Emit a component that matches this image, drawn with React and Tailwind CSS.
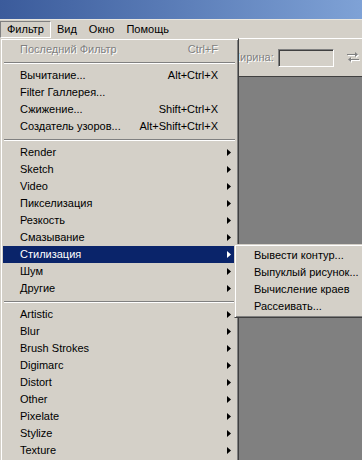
import React from 'react';

const FONT = { fontFamily: '"Liberation Sans", Arial, sans-serif' };

const MENU_BAR = ['Фильтр', 'Вид', 'Окно', 'Помощь'];

// null = separator
const ITEMS = [
  { label: 'Последний Фильтр', shortcut: 'Ctrl+F', disabled: true },
  null,
  { label: 'Вычитание...', shortcut: 'Alt+Ctrl+X' },
  { label: 'Filter Галлерея...' },
  { label: 'Сжижение...', shortcut: 'Shift+Ctrl+X' },
  { label: 'Создатель узоров...', shortcut: 'Alt+Shift+Ctrl+X' },
  null,
  { label: 'Render', sub: true },
  { label: 'Sketch', sub: true },
  { label: 'Video', sub: true },
  { label: 'Пикселизация', sub: true },
  { label: 'Резкость', sub: true },
  { label: 'Смазывание', sub: true },
  { label: 'Стилизация', sub: true, active: true },
  { label: 'Шум', sub: true },
  { label: 'Другие', sub: true },
  null,
  { label: 'Artistic', sub: true },
  { label: 'Blur', sub: true },
  { label: 'Brush Strokes', sub: true },
  { label: 'Digimarc', sub: true },
  { label: 'Distort', sub: true },
  { label: 'Other', sub: true },
  { label: 'Pixelate', sub: true },
  { label: 'Stylize', sub: true },
  { label: 'Texture', sub: true },
];

const SUB_ITEMS = ['Вывести контур...', 'Выпуклый рисунок...', 'Вычисление краев', 'Рассеивать...'];

function Arrow({ white }) {
  return (
    <svg width="4" height="7" viewBox="0 0 4 7" className="absolute right-[5px] top-[5px]">
      <polygon points="0,0 4,3.5 0,7" fill={white ? '#fff' : '#000'} />
    </svg>
  );
}

function Separator() {
  return (
    <div className="h-[9px] flex items-center px-px">
      <div className="w-full border-t border-t-[#808080] border-b border-b-white" />
    </div>
  );
}

function MenuItem({ item }) {
  return (
    <div
      className={
        'relative h-[17px] flex items-center pl-[17px] pr-[18px] whitespace-nowrap ' +
        (item.active ? 'bg-[#0a246a] text-white' : 'text-black')
      }
    >
      <span
        className={item.disabled ? 'flex-1 text-[#808080] [text-shadow:1px_1px_0_#fff]' : 'flex-1'}
      >
        {item.label}
      </span>
      {item.shortcut && (
        <span className={item.disabled ? 'text-[#808080] [text-shadow:1px_1px_0_#fff]' : ''}>
          {item.shortcut}
        </span>
      )}
      {item.sub && <Arrow white={item.active} />}
    </div>
  );
}

function SwapIcon() {
  return (
    <svg width="13" height="11" viewBox="0 0 13 11">
      <g fill="#fff" transform="translate(1,1)">
        <rect x="0" y="2" width="9" height="1" />
        <polygon points="8,0 11,2.5 8,5" />
        <rect x="3" y="7" width="9" height="1" />
        <polygon points="4,5 1,7.5 4,10" />
      </g>
      <g fill="#808080">
        <rect x="0" y="2" width="9" height="1" />
        <polygon points="8,0 11,2.5 8,5" />
        <rect x="3" y="7" width="9" height="1" />
        <polygon points="4,5 1,7.5 4,10" />
      </g>
    </svg>
  );
}

export default function App() {
  return (
    <div className="relative w-[362px] h-[460px] overflow-hidden bg-[#d4d0c8] text-[11px] flex flex-col" style={FONT}>
      {/* Title bar */}
      <div className="h-[19px] bg-gradient-to-r from-[#3b5b9b] to-[#7fa2d6]" />

      {/* Menu bar */}
      <div className="h-[19px] flex items-center border-t border-t-[#e8e6e0]">
        {MENU_BAR.map((m, i) => (
          <div
            key={m}
            className={
              'h-[17px] flex items-center px-[6px] text-black ' +
              (i === 0 ? 'border border-t-[#808080] border-l-[#808080] border-r-white border-b-white px-[5px]' : '')
            }
          >
            {m}
          </div>
        ))}
      </div>

      {/* Options bar */}
      <div className="h-[38px] flex items-center border-t border-t-white pl-[230px]">
        <span className="text-[#808080] [text-shadow:1px_1px_0_#fff]">Ширина:</span>
        <div className="ml-[4px] w-[56px] h-[18px] border border-t-[#808080] border-l-[#808080] border-r-white border-b-white shadow-[inset_1px_1px_0_#404040,inset_-1px_-1px_0_#d4d0c8]" />
        <div className="ml-[13px] flex items-center">
          <SwapIcon />
        </div>
      </div>

      {/* Workspace */}
      <div className="flex-1 bg-[#808080] border-t border-t-[#404040]" />

      {/* Filter dropdown */}
      <div className="absolute left-0 top-[38px] w-[239px] p-[2px] bg-[#d4d0c8] border border-t-[#d4d0c8] border-l-[#d4d0c8] border-r-[#404040] border-b-[#404040] shadow-[inset_1px_1px_0_#fff,inset_-1px_-1px_0_#808080]">
        {ITEMS.map((item, i) => (item ? <MenuItem key={i} item={item} /> : <Separator key={i} />))}
      </div>

      {/* Stylize submenu */}
      <div className="absolute left-[234px] top-[244px] w-[140px] p-[2px] bg-[#d4d0c8] border border-t-[#d4d0c8] border-l-[#d4d0c8] border-r-[#404040] border-b-[#404040] shadow-[inset_1px_1px_0_#fff,inset_-1px_-1px_0_#808080]">
        {SUB_ITEMS.map((s) => (
          <div key={s} className="h-[17px] flex items-center pl-[17px] whitespace-nowrap text-black">
            {s}
          </div>
        ))}
      </div>
    </div>
  );
}
